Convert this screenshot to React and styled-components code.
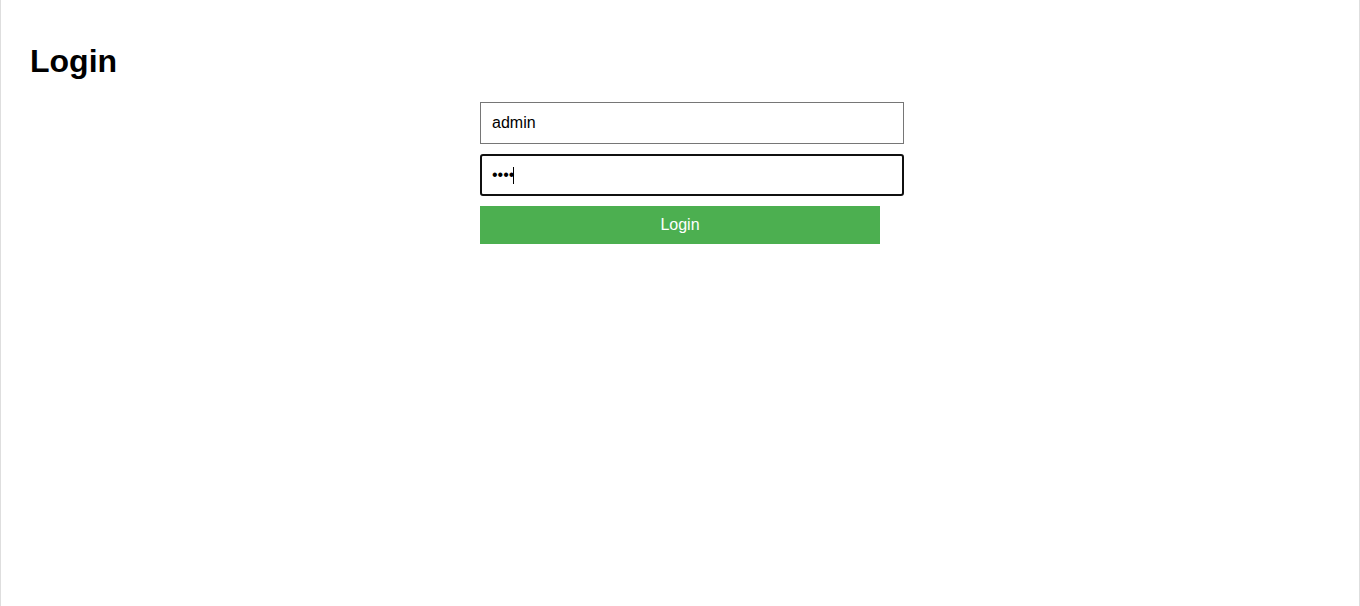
import React from 'react';
import styled, {createGlobalStyle} from 'styled-components';

const GlobalStyle = createGlobalStyle`
  html, body {
    margin: 0;
    padding: 0;
    background: #fff;
  }
  body {
    font-family: "Liberation Sans", Arial, sans-serif;
  }
`;

const Page = styled.div`
  box-sizing: border-box;
  min-height: 100vh;
  padding: 1px 29px 0;
  border-left: 1px solid #dedede;
  border-right: 1px solid #dedede;
`;

const Title = styled.h1`
  margin: 42px 0 22px;
  font-size: 32px;
  font-weight: bold;
  color: #000;
`;

const Form = styled.form`
  width: 400px;
  margin: 0 auto;
  display: flex;
  flex-direction: column;
  gap: 10px;
`;

const Field = styled.div`
  position: relative;
  width: 424px;
`;

const Input = styled.input`
  box-sizing: border-box;
  display: block;
  width: 424px;
  height: 42px;
  margin: 0;
  padding: 0 ${props => props.focused ? '10px' : '11px'};
  border: ${props => props.focused ? '2px solid #101010' : '1px solid #767676'};
  border-radius: ${props => props.focused ? '3px' : '0'};
  outline: none;
  background: #fff;
  color: #000;
  font-family: "Liberation Sans", Arial, sans-serif;
  font-size: 16px;
`;

const Caret = styled.span`
  position: absolute;
  left: 33px;
  top: 13px;
  width: 1px;
  height: 17px;
  background: #000;
`;

const Button = styled.button`
  width: 400px;
  height: 38px;
  border: none;
  background: #4caf50;
  color: #fff;
  font-family: "Liberation Sans", Arial, sans-serif;
  font-size: 16px;
  cursor: pointer;
`;

export default function App() {
  return (
    <>
      <GlobalStyle />
      <Page>
        <Title>Login</Title>
        <Form onSubmit={e => e.preventDefault()}>
          <Field>
            <Input type='text' defaultValue='admin' />
          </Field>
          <Field>
            <Input type='password' defaultValue='1234' focused />
            <Caret />
          </Field>
          <Button type='submit'>Login</Button>
        </Form>
      </Page>
    </>
  );
}
